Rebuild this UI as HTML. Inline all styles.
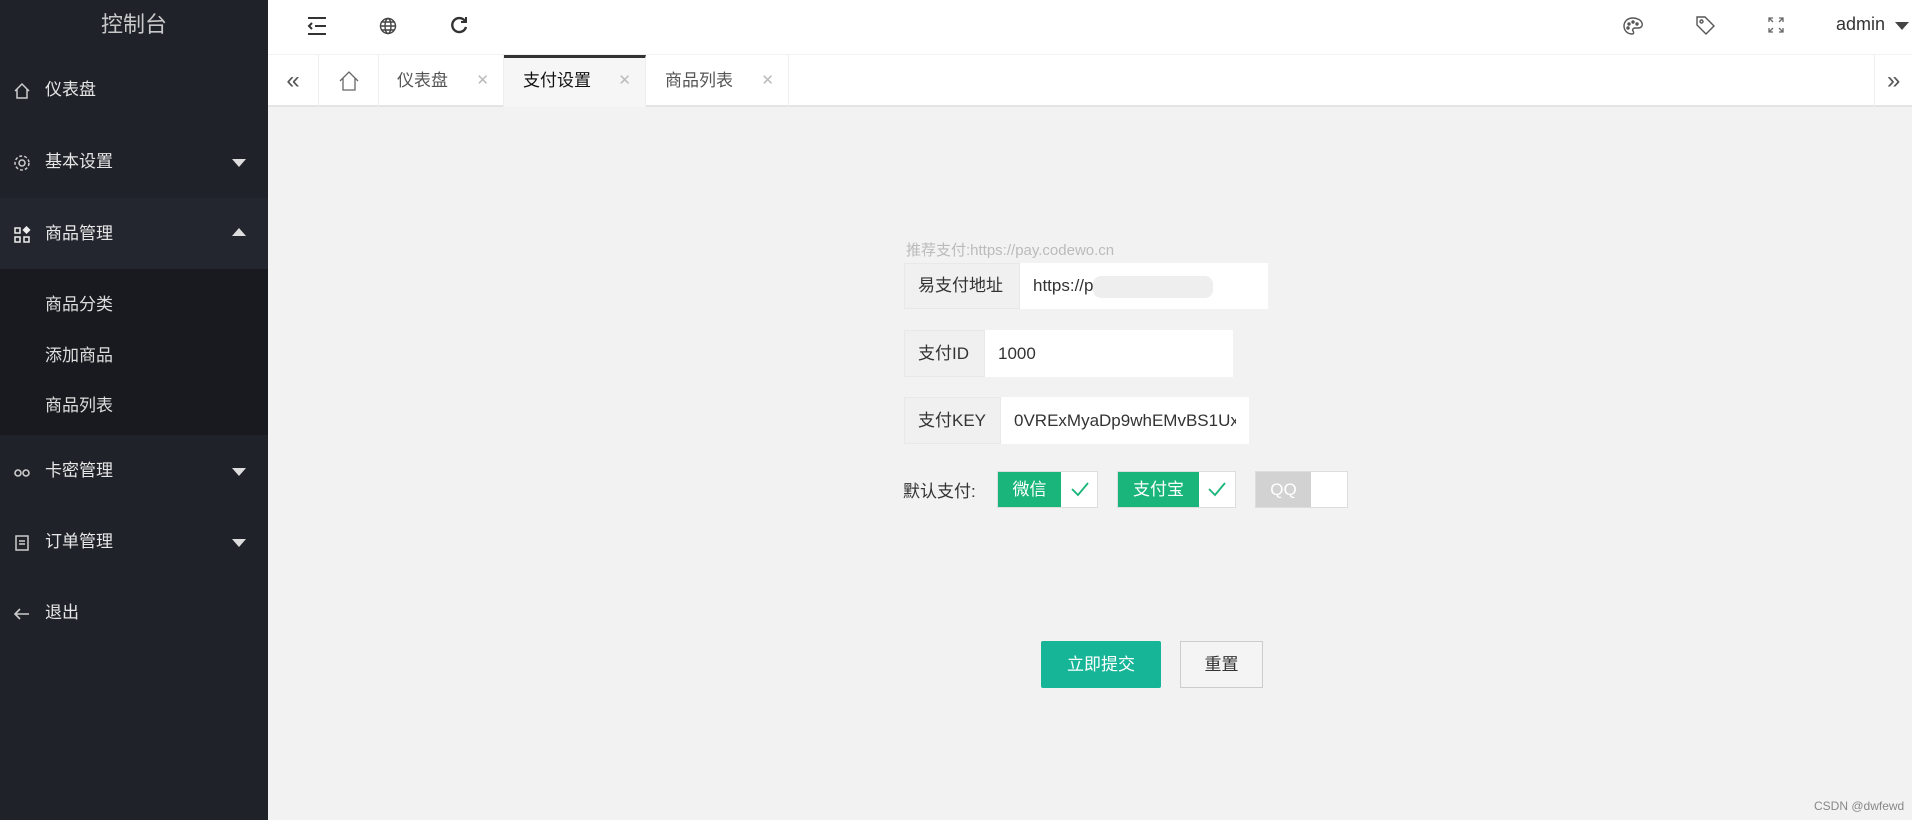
<!DOCTYPE html>
<html><head><meta charset="utf-8"><style>
*{margin:0;padding:0;box-sizing:border-box}
body{width:1912px;height:820px;overflow:hidden;background:#f2f2f2;font-family:"Liberation Sans","Noto Sans CJK SC",sans-serif;position:relative;color:#333}
.side{position:absolute;left:0;top:0;width:268px;height:820px;background:#20222a}
.logo{height:54px;line-height:50px;text-align:center;color:#c8c8c8;font-size:22px;background:#20222a}
.mi{position:absolute;left:0;width:268px;height:72px;line-height:72px;color:#e6e6e6;font-size:17px;padding-left:45px}
.mi svg{position:absolute;left:13px;top:28px}
.arr{position:absolute;right:22px;top:33px;width:0;height:0;border-left:7px solid transparent;border-right:7px solid transparent;border-top:8px solid #ddd}
.arr.up{border-top:none;border-bottom:8px solid #ddd;top:30px}
.sub{position:absolute;left:0;top:269px;width:268px;height:166px;background:#191a1f}
.si{position:absolute;left:45px;color:#ddd;font-size:17px}
.top{position:absolute;left:268px;top:0;right:0;height:54px;background:#fff}
.tabs{position:absolute;left:268px;top:55px;right:0;height:52px;background:#fff;border-bottom:2px solid #e4e4e4}
.tab{position:absolute;top:0;height:52px;line-height:52px;font-size:17px;color:#555;border-right:1px solid #eee}
.tab .x{position:absolute;right:14px;color:#bbb;font-size:15px}
.lbl{position:absolute;background:#f0f0f0;border:1px solid #e8e8e8;font-size:17px;color:#333;padding-left:13px}
.inp{position:absolute;background:#fff;font-size:17px;color:#333;padding-left:13px}
.sw{position:absolute;top:471px;height:37px;background:#fff;border:1px solid #ddd}
.sw .g{position:absolute;left:0;top:0;bottom:0;background:#19b57a;color:#fff;font-size:17px;text-align:center;line-height:35px}
.btn{position:absolute;top:641px;height:47px;line-height:47px;text-align:center;font-size:17px}
</style></head><body>
<div class="side">
<div class="logo">控制台</div>
<div class="mi" style="top:54px"><svg width="18" height="18" viewBox="0 0 18 18" fill="none" stroke="#ccc" stroke-width="1.5"><path d="M2 9L9 2l7 7M4 7v9h10V7"/></svg>仪表盘</div>
<div class="mi" style="top:126px"><svg width="18" height="18" viewBox="0 0 18 18" fill="none" stroke="#ccc" stroke-width="1.5"><circle cx="9" cy="9" r="3"/><circle cx="9" cy="9" r="7" stroke-dasharray="3 2"/></svg>基本设置<span class="arr"></span></div>
<div class="mi" style="top:198px;background:#23262e"><svg width="18" height="18" viewBox="0 0 18 18" fill="none" stroke="#eee" stroke-width="1.5"><rect x="2" y="2" width="5" height="5"/><rect x="2" y="11" width="5" height="5"/><rect x="11" y="11" width="5" height="5"/><path d="M13.5 1l3 3-3 3-3-3z" fill="#eee"/></svg>商品管理<span class="arr up"></span></div>
<div class="sub">
<div class="si" style="top:21px">商品分类</div>
<div class="si" style="top:72px">添加商品</div>
<div class="si" style="top:122px">商品列表</div>
</div>
<div class="mi" style="top:435px"><svg width="18" height="18" viewBox="0 0 18 18" fill="none" stroke="#ccc" stroke-width="1.6"><circle cx="5" cy="10" r="3"/><circle cx="13" cy="10" r="3"/></svg>卡密管理<span class="arr"></span></div>
<div class="mi" style="top:506px"><svg width="18" height="18" viewBox="0 0 18 18" fill="none" stroke="#ccc" stroke-width="1.5"><rect x="3" y="2" width="12" height="14"/><path d="M6 7h6M6 10h6"/></svg>订单管理<span class="arr"></span></div>
<div class="mi" style="top:577px"><svg width="18" height="18" viewBox="0 0 18 18" fill="none" stroke="#ccc" stroke-width="1.6"><path d="M16 9H2M7 4L2 9l5 5"/></svg>退出</div>
</div>
<div class="top">
<svg style="position:absolute;left:38px;top:16px" width="22" height="20" viewBox="0 0 22 20" fill="none" stroke="#333" stroke-width="2"><path d="M2 2h18M9 10h11M2 18h18M6 7l-3 3 3 3"/></svg>
<svg style="position:absolute;left:111px;top:17px" width="18" height="18" viewBox="0 0 18 18" fill="none" stroke="#444" stroke-width="1.4"><circle cx="9" cy="9" r="7.5"/><ellipse cx="9" cy="9" rx="3" ry="7.5"/><path d="M1.5 9h15M3 5h12M3 13h12"/></svg>
<svg style="position:absolute;left:181px;top:15px" width="20" height="20" viewBox="0 0 20 20" fill="none" stroke="#333" stroke-width="2.4"><path d="M16 6A7 7 0 1 0 17 12"/><path d="M17 2v5h-5" stroke-width="2"/></svg>
<svg style="position:absolute;left:1354px;top:16px" width="22" height="20" viewBox="0 0 22 20" fill="none" stroke="#555" stroke-width="1.4"><path d="M11 2C5 2 2 6 2 10s3 8 8 8c2 0 2-2 1-3s0-3 2-3h3c3 0 5-2 4-5-1-3-5-5-9-5z"/><circle cx="7" cy="8" r="1" fill="#555"/><circle cx="11" cy="6" r="1" fill="#555"/><circle cx="15" cy="8" r="1" fill="#555"/><circle cx="6" cy="12" r="1" fill="#555"/></svg>
<svg style="position:absolute;left:1426px;top:14px" width="22" height="22" viewBox="0 0 22 22" fill="none" stroke="#555" stroke-width="1.4"><path d="M3 3h8l9 9-8 8-9-9z"/><circle cx="7.5" cy="7.5" r="1.5"/></svg>
<svg style="position:absolute;left:1500px;top:17px" width="16" height="16" viewBox="0 0 16 16" fill="none" stroke="#666" stroke-width="1.3"><path d="M1 5V1h4M1 1l4 4M15 5V1h-4M15 1l-4 4M1 11v4h4M1 15l4-4M15 11v4h-4M15 15l-4-4"/></svg>
<div style="position:absolute;left:1568px;top:14px;font-size:18px;color:#333">admin</div>
<span style="position:absolute;left:1627px;top:22px;border-left:7px solid transparent;border-right:7px solid transparent;border-top:8px solid #444"></span>
</div>
<div class="tabs">
<div class="tab" style="left:0;width:51px;text-align:center;font-size:24px;color:#555">«</div>
<div class="tab" style="left:51px;width:60px"><svg style="position:absolute;left:19px;top:15px" width="22" height="22" viewBox="0 0 22 22" fill="none" stroke="#666" stroke-width="1.3"><path d="M2 11L11 2l9 9M5 8v12h12V8"/></svg></div>
<div class="tab" style="left:111px;width:125px;padding-left:18px">仪表盘<span class="x">✕</span></div>
<div class="tab" style="left:236px;width:142px;padding-left:19px;color:#111;background:#f6f6f6;border-top:3px solid #333;line-height:46px">支付设置<span class="x">✕</span></div>
<div class="tab" style="left:378px;width:143px;padding-left:19px">商品列表<span class="x">✕</span></div>
<div class="tab" style="left:1606px;width:40px;border-left:1px solid #eee;border-right:none;padding-left:12px;font-size:24px;color:#555">»</div>
</div>
<div style="position:absolute;left:906px;top:239px;font-size:15px;color:#bbb">推荐支付:https://pay.codewo.cn</div>
<div class="lbl" style="left:904px;top:263px;width:116px;height:46px;line-height:44px">易支付地址</div>
<div class="inp" style="left:1020px;top:263px;width:248px;height:46px;line-height:46px">https://p<span style="display:inline-block;width:120px;height:22px;background:#eee;vertical-align:middle;border-radius:8px"></span></div>
<div class="lbl" style="left:904px;top:330px;width:81px;height:47px;line-height:45px">支付ID</div>
<div class="inp" style="left:985px;top:330px;width:248px;height:47px;line-height:47px">1000</div>
<div class="lbl" style="left:904px;top:397px;width:97px;height:47px;line-height:45px">支付KEY</div>
<div class="inp" style="left:1001px;top:397px;width:248px;height:47px;line-height:47px;overflow:hidden;white-space:nowrap;padding-right:12px"><div style="overflow:hidden;width:222px">0VRExMyaDp9whEMvBS1UxK</div></div>
<div style="position:absolute;left:903px;top:477px;font-size:17px">默认支付:</div>
<div class="sw" style="left:997px;width:101px"><div class="g" style="width:63px">微信</div><svg style="position:absolute;left:72px;top:8px" width="20" height="18" viewBox="0 0 20 18" fill="none" stroke="#19b57a" stroke-width="1.8"><path d="M2 9l6 6L18 3"/></svg></div>
<div class="sw" style="left:1117px;width:119px"><div class="g" style="width:81px">支付宝</div><svg style="position:absolute;left:89px;top:8px" width="20" height="18" viewBox="0 0 20 18" fill="none" stroke="#19b57a" stroke-width="1.8"><path d="M2 9l6 6L18 3"/></svg></div>
<div class="sw" style="left:1255px;width:93px"><div class="g" style="width:55px;background:#d2d2d2">QQ</div></div>
<div class="btn" style="left:1041px;width:120px;background:#16b597;color:#fff;border-radius:2px">立即提交</div>
<div class="btn" style="left:1180px;width:83px;background:#f4f4f4;border:1px solid #ccc;color:#333;line-height:45px">重置</div>
<div style="position:absolute;left:1814px;top:799px;font-size:12px;color:#888">CSDN @dwfewd</div>
</body></html>
